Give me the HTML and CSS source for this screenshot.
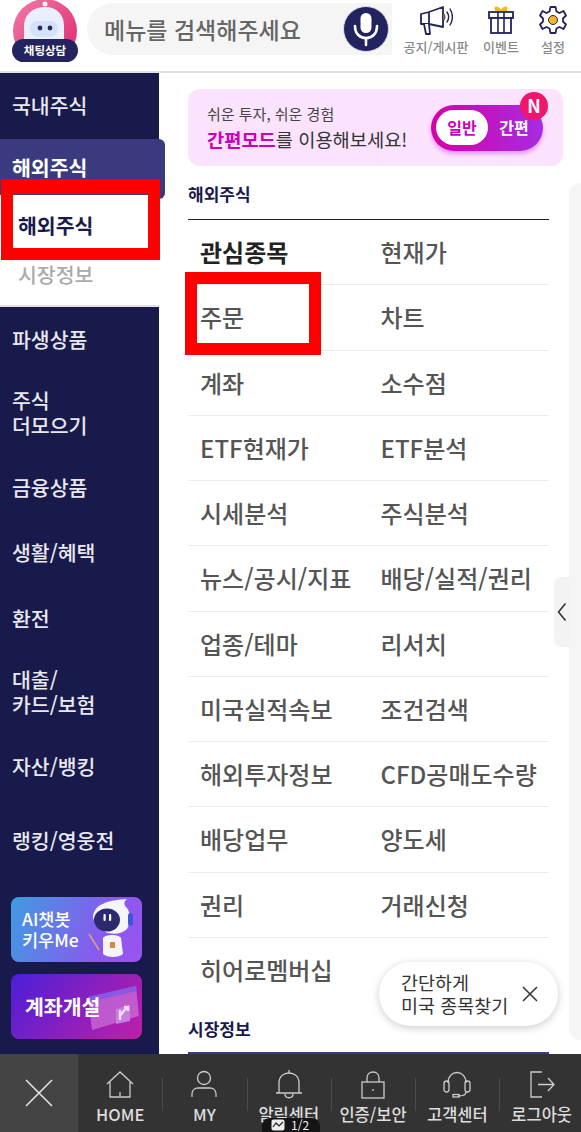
FILE: index.html
```html
<!DOCTYPE html>
<html lang="ko">
<head>
    <meta charset="utf-8">
    <meta name="viewport" content="width=device-width, initial-scale=1">
    <title>전체메뉴</title>
    <link rel="stylesheet" href="styles.css">
</head>
<body>
<div class="page">
    <!-- 상단 -->
    <div class="header">
        <div class="chat-bot">
            <svg width="66" height="62" viewBox="0 0 66 62">
                <defs>
                    <linearGradient id="botBg" x1="0" y1="0" x2="1" y2="1">
                        <stop offset="0" stop-color="#ee7da6"/>
                        <stop offset="1" stop-color="#e0246c"/>
                    </linearGradient>
                </defs>
                <circle cx="33" cy="31" r="32" fill="url(#botBg)"/>
                <circle cx="33" cy="4" r="2.500" fill="#f3f0f8"/>
                <path d="M12 44V26C12 14 22 7 33 7S52 14 52 26V44Z" fill="#eaf0fb"/>
                <rect x="18" y="21" width="28" height="16" rx="8" fill="#d3e2fa"/>
                <circle cx="28" cy="28" r="2.400" fill="#2a2a55"/>
                <circle cx="38" cy="28" r="2.400" fill="#2a2a55"/>
            </svg>
            <div class="chat-label">채팅상담</div>
        </div>
        <div class="search">
            <span class="search-text">메뉴를 검색해주세요</span>
            <div class="mic">
                <svg width="26" height="36" viewBox="0 0 26 36">
                    <rect x="7.500" y="2" width="11" height="20" rx="5.500" fill="#fff"/>
                    <path d="M2 15C2 23 7 27 13 27S24 23 24 15M13 27V34" fill="none" stroke="#fff" stroke-width="2.600" stroke-linecap="round"/>
                </svg>
            </div>
        </div>
        <div class="top-links">
            <div class="top-link notice">
                <svg width="34" height="30" viewBox="0 0 34 30">
                    <path d="M2 9L10 7L10 19L2 19ZM10 7L24 2V22L10 19" fill="#fff" stroke="#23235a" stroke-width="1.800" stroke-linejoin="round"/>
                    <path d="M5 19L7 29H11L10 19" fill="#fff" stroke="#23235a" stroke-width="1.800" stroke-linejoin="round"/>
                    <path d="M24 8C26.500 9 26.500 15 24 16Z" fill="#f3b727" stroke="#23235a" stroke-width="1"/>
                    <path d="M28 7C30 10 30 14 28 17M31 4C34 9 34 15 31 20" fill="none" stroke="#23235a" stroke-width="1.400" stroke-linecap="round"/>
                </svg>
                <span>공지/게시판</span>
            </div>
            <div class="top-link event">
                <svg width="28" height="30" viewBox="0 0 28 30">
                    <path d="M9 6C6 1 11 1 14 6C17 1 22 1 19 6" fill="#f3b727" stroke="#f3b727" stroke-width="1.400"/>
                    <rect x="2" y="7" width="24" height="6" fill="#fff" stroke="#23235a" stroke-width="1.800"/>
                    <rect x="4" y="13" width="20" height="15" fill="#fff" stroke="#23235a" stroke-width="1.800"/>
                    <path d="M11 7V28M17 7V28" stroke="#23235a" stroke-width="1.600"/>
                </svg>
                <span>이벤트</span>
            </div>
            <div class="top-link setting">
                <svg width="30" height="30" viewBox="0 0 30 30">
                    <path d="M12.500 2H17.500L18.500 6.500L21.500 8L25.500 6L28 10.500L25 13.500V16.500L28 19.500L25.500 24L21.500 22L18.500 23.500L17.500 28H12.500L11.500 23.500L8.500 22L4.500 24L2 19.500L5 16.500V13.500L2 10.500L4.500 6L8.500 8L11.500 6.500Z" fill="#fff" stroke="#23235a" stroke-width="1.800" stroke-linejoin="round"/>
                    <circle cx="15" cy="15" r="4.500" fill="#f3b727" stroke="#23235a" stroke-width="1"/>
                </svg>
                <span>설정</span>
            </div>
        </div>
    </div>

    <div class="content">
        <!-- 왼쪽 메뉴 -->
        <div class="sidebar">
            <div class="side-item">국내주식</div>
            <div class="side-active">해외주식</div>
            <div class="side-sub">
                <div class="sub-item on">해외주식</div>
                <div class="sub-item">시장정보</div>
            </div>
            <div class="side-item">파생상품</div>
            <div class="side-item tall">주식<br>더모으기</div>
            <div class="side-item">금융상품</div>
            <div class="side-item">생활/혜택</div>
            <div class="side-item">환전</div>
            <div class="side-item tall">대출/<br>카드/보험</div>
            <div class="side-item">자산/뱅킹</div>
            <div class="side-item tall">랭킹/영웅전</div>
            <div class="side-banners">
                <div class="side-banner chatbot">
                    <span>AI챗봇<br>키우Me</span>
                    <svg width="50" height="62" viewBox="0 0 50 62">
                        <path d="M12 52L2 36" stroke="#d8a27a" stroke-width="1.500"/>
                        <path d="M16 40C18 36 32 36 34 40L36 56C32 60 20 60 16 56Z" fill="#f4f4fb"/>
                        <path d="M6 20C6 6 22 2 40 1C36 4 37 7 40 10C44 16 44 24 40 31C32 39 12 38 6 20Z" fill="#f4f4fb"/>
                        <ellipse cx="20" cy="22" rx="13" ry="11.500" fill="#2b2a6e"/>
                        <rect x="16.500" y="16" width="2.200" height="7" rx="1" fill="#fff"/>
                        <rect x="22" y="16" width="2.200" height="7" rx="1" fill="#fff"/>
                        <rect x="41" y="15" width="5" height="13" rx="2.500" fill="#3f55d8"/>
                        <rect x="23" y="44" width="5" height="6" fill="#d8893a"/>
                    </svg>
                </div>
                <div class="side-banner account">
                    <svg class="card-art" width="54" height="46" viewBox="0 0 54 46">
                        <path d="M2 12L50 1L53 31L6 45Z" fill="#d98be0" fill-opacity=".55"/>
                        <path d="M2 12L50 1L50.500 6L3 17Z" fill="#7c5ae6" fill-opacity=".8"/>
                        <path d="M30 24L44 20L44 36L30 39Z" fill="#c77fe0"/>
                        <path d="M34 35L34 25M34 31L41 22M38 22L42 22L42 26" fill="none" stroke="#f3d9fb" stroke-width="2.400"/>
                    </svg>
                    <span>계좌개설</span>
                </div>
            </div>
        </div>

        <!-- 메뉴 목록 -->
        <div class="main">
            <div class="mode-banner">
                <div class="mode-text">
                    <div class="mode-small">쉬운 투자, 쉬운 경험</div>
                    <div class="mode-big"><b>간편모드</b>를 이용해보세요!</div>
                </div>
                <div class="mode-toggle">
                    <span class="mode-off">일반</span>
                    <span class="mode-on">간편</span>
                    <span class="mode-new">N</span>
                </div>
            </div>
            <div class="section-title">해외주식</div>
            <div class="menu-grid">
                <div class="menu-item strong">관심종목</div>
                <div class="menu-item">현재가</div>
                <div class="menu-item">주문</div>
                <div class="menu-item">차트</div>
                <div class="menu-item">계좌</div>
                <div class="menu-item">소수점</div>
                <div class="menu-item">ETF현재가</div>
                <div class="menu-item">ETF분석</div>
                <div class="menu-item">시세분석</div>
                <div class="menu-item">주식분석</div>
                <div class="menu-item">뉴스/공시/지표</div>
                <div class="menu-item">배당/실적/권리</div>
                <div class="menu-item">업종/테마</div>
                <div class="menu-item">리서치</div>
                <div class="menu-item">미국실적속보</div>
                <div class="menu-item">조건검색</div>
                <div class="menu-item">해외투자정보</div>
                <div class="menu-item">CFD공매도수량</div>
                <div class="menu-item">배당업무</div>
                <div class="menu-item">양도세</div>
                <div class="menu-item">권리</div>
                <div class="menu-item">거래신청</div>
                <div class="menu-item last">히어로멤버십</div>
                <div class="menu-item last"></div>
            </div>
            <div class="section-title second">시장정보</div>
        </div>
    </div>

    <!-- 오른쪽 패널, 토스트, 빨간 표시 -->
    <div class="right-panel"></div>
    <div class="panel-handle">
        <svg width="10" height="20" viewBox="0 0 10 20"><path d="M8.500 1.500L1.500 10L8.500 18.500" fill="none" stroke="#333" stroke-width="1.600"/></svg>
    </div>
    <div class="toast">
        <div class="toast-text">간단하게<br>미국 종목찾기</div>
        <svg width="16" height="16" viewBox="0 0 16 16"><path d="M1 1L15 15M15 1L1 15" stroke="#333" stroke-width="1.500"/></svg>
    </div>
    <div class="mark mark-side"></div>
    <div class="mark mark-order"></div>

    <!-- 하단 -->
    <div class="footer">
        <div class="foot-close">
            <svg width="28" height="28" viewBox="0 0 28 28"><path d="M1 1L27 27M27 1L1 27" stroke="#e8e8e8" stroke-width="1.500"/></svg>
        </div>
        <div class="foot-item">
            <svg width="30" height="30" viewBox="0 0 30 30"><path d="M2 14L15 2L28 14M5 12V27H25V12M15 22V26" fill="none" stroke="#ccc" stroke-width="1.300"/></svg>
            <span>HOME</span>
        </div>
        <div class="foot-item">
            <svg width="30" height="30" viewBox="0 0 30 30"><circle cx="15" cy="8" r="6.500" fill="none" stroke="#ccc" stroke-width="1.300"/><path d="M3 27V24C3 20 6 18 9 18H21C24 18 27 20 27 24V27" fill="none" stroke="#ccc" stroke-width="1.300"/></svg>
            <span>MY</span>
        </div>
        <div class="foot-item">
            <svg width="30" height="30" viewBox="0 0 30 30"><path d="M15 0V3M5 23V13C5 6 10 3 15 3S25 6 25 13V23M2 23H28M11 24C11 29 19 29 19 24" fill="none" stroke="#ccc" stroke-width="1.300"/></svg>
            <span>알림센터</span>
        </div>
        <div class="foot-item">
            <svg width="30" height="30" viewBox="0 0 30 30"><rect x="4" y="12" width="22" height="16" fill="none" stroke="#ccc" stroke-width="1.300"/><path d="M9 12V8C9 0 21 0 21 8V12M15 19V21" fill="none" stroke="#ccc" stroke-width="1.300"/></svg>
            <span>인증/보안</span>
        </div>
        <div class="foot-item">
            <svg width="30" height="30" viewBox="0 0 30 30"><path d="M6 13C6 -1 24 -1 24 13M24 22C24 25 21 26 16 26" fill="none" stroke="#ccc" stroke-width="1.300"/><rect x="2" y="11" width="5" height="11" rx="2.500" fill="none" stroke="#ccc" stroke-width="1.300"/><rect x="23" y="11" width="5" height="11" rx="2.500" fill="none" stroke="#ccc" stroke-width="1.300"/><rect x="11" y="24.500" width="6" height="2.500" fill="none" stroke="#ccc" stroke-width="1.300"/></svg>
            <span>고객센터</span>
        </div>
        <div class="foot-item">
            <svg width="30" height="30" viewBox="0 0 30 30"><path d="M15 2H4V27H15M11 14.500H27M21 8L27 14.500L21 21" fill="none" stroke="#ccc" stroke-width="1.300"/></svg>
            <span>로그아웃</span>
        </div>
    </div>
    <div class="pager">
        <svg width="14" height="12" viewBox="0 0 14 12"><rect x=".5" y=".5" width="13" height="11" rx="2" fill="#eee"/><path d="M2 8L5 4L8 7L12 3" fill="none" stroke="#222" stroke-width="1.200"/></svg>
        <span>1/2</span>
    </div>
</div>
</body>
</html>
```

FILE: styles.css
```css
* {
    box-sizing: border-box;
}
body {
    margin: 0;
    background: #fff;
    font-family: "Noto Sans CJK KR", "Noto Sans", sans-serif;
}
.page {
    position: relative;
    width: 581px;
    height: 1132px;
    overflow: hidden;
    display: flex;
    flex-direction: column;
}

/* header */
.header {
    height: 73px;
    flex: none;
    display: flex;
    padding: 3px 0 0 12px;
    border-bottom: 2px solid #e2e2e2;
}
.chat-bot {
    position: relative;
    width: 66px;
    height: 62px;
    margin-top: -3px;
    flex: none;
}
.chat-bot svg {
    display: block;
}
.chat-label {
    position: absolute;
    left: 0;
    top: 39px;
    width: 66px;
    height: 23px;
    border-radius: 12px;
    background: #23235f;
    color: #fff;
    font-size: 11.500px;
    font-weight: 700;
    line-height: 23px;
    text-align: center;
}
.search {
    width: 305px;
    height: 52px;
    margin-left: 9px;
    padding: 0 3px 0 17px;
    flex: none;
    display: flex;
    align-items: center;
    justify-content: space-between;
    border-radius: 26px 0 0 26px;
    background: #f5f5f5;
}
.search-text {
    color: #666;
    font-size: 23px;
    font-weight: 500;
}
.mic {
    width: 46px;
    height: 46px;
    border-radius: 50%;
    background: #23235f;
    border: 1px solid #ddd;
    display: flex;
    align-items: center;
    justify-content: center;
}
.top-links {
    flex: 1;
    display: flex;
}
.top-link {
    display: flex;
    flex-direction: column;
    align-items: center;
    color: #888;
    font-size: 13px;
    font-weight: 500;
    line-height: 18px;
    white-space: nowrap;
}
.top-link svg {
    margin: 2px 0 3px;
    display: block;
}
.top-link.notice {
    width: 72px;
    margin-left: 8px;
}
.top-link.event {
    width: 56px;
    margin-left: 1px;
}
.top-link.setting {
    width: 48px;
}

/* sidebar */
.content {
    flex: 1;
    display: flex;
    min-height: 0;
}
.sidebar {
    width: 159px;
    flex: none;
    background: #191a4c;
    color: #e8e8ee;
    font-size: 20.500px;
    font-weight: 500;
}
.side-item {
    height: 65.500px;
    padding-left: 12px;
    display: flex;
    align-items: center;
    line-height: 25px;
}
.side-item.tall {
    height: 82.500px;
}
.side-active {
    width: 165px;
    height: 60px;
    padding: 16px 0 0 12px;
    position: relative;
    margin-bottom: -4px;
    background: #3a3a7e;
    border-radius: 0 6px 6px 0;
    color: #fff;
    font-weight: 700;
    line-height: 25px;
}
.side-sub {
    height: 112px;
    position: relative;
    padding-top: 5px;
    background: #fff;
    border-bottom: 2px solid #e2e2e2;
}
.sub-item {
    height: 50px;
    padding-left: 18px;
    color: #aaa;
    line-height: 50px;
}
.sub-item.on {
    height: 49px;
    color: #191a4c;
    font-weight: 700;
}
.side-banners {
    padding: 15px 17px 0 11px;
}
.side-banner {
    height: 65px;
    margin-bottom: 12px;
    border-radius: 8px;
    display: flex;
    align-items: center;
    color: #fff;
    position: relative;
}
.side-banner.chatbot {
    padding-left: 11px;
    justify-content: space-between;
    background: linear-gradient(110deg, #3f9ce0 0%, #8b58ee 70%, #9a55f0 100%);
    font-size: 17.500px;
    font-weight: 500;
    line-height: 21px;
}
.side-banner.chatbot svg {
    margin-right: 5px;
}
.side-banner.account {
    padding-left: 14px;
    background: linear-gradient(130deg, #4b1fd8 0%, #c01fa8 100%);
    font-size: 20.500px;
    font-weight: 700;
}
.side-banner.account span {
    position: relative;
}
.card-art {
    position: absolute;
    right: 2px;
    top: 11px;
}

/* main */
.main {
    flex: 1;
    padding: 16px 32px 0 29px;
    min-width: 0;
}
.mode-banner {
    height: 77px;
    width: 375px;
    padding: 0 20px 0 19px;
    display: flex;
    align-items: center;
    justify-content: space-between;
    background: #fce3fd;
    border-radius: 12px;
}
.mode-small {
    color: #444;
    font-size: 15px;
    line-height: 22px;
}
.mode-big {
    color: #333;
    font-size: 18.700px;
    line-height: 27px;
    white-space: nowrap;
}
.mode-big b {
    color: #cc00b8;
    font-weight: 700;
}
.mode-toggle {
    position: relative;
    width: 112px;
    height: 46px;
    padding: 5px 0 0 5px;
    flex: none;
    display: flex;
    border-radius: 23px;
    background: linear-gradient(90deg, #d600a8, #a82ce0);
    box-shadow: 0 3px 4px rgba(190, 60, 230, .45);
    font-size: 16px;
    font-weight: 700;
}
.mode-off {
    width: 52px;
    height: 35px;
    border-radius: 18px;
    background: #fff;
    color: #cc00b8;
    line-height: 34px;
    text-align: center;
}
.mode-on {
    width: 52px;
    color: #fff;
    line-height: 34px;
    text-align: center;
}
.mode-new {
    position: absolute;
    right: -5px;
    top: -13px;
    width: 28px;
    height: 28px;
    border-radius: 50%;
    background: #f0166e;
    color: #fff;
    font-size: 18px;
    font-weight: 700;
    line-height: 27px;
    text-align: center;
}
.section-title {
    margin-top: 16px;
    height: 37px;
    color: #191a4c;
    font-size: 17px;
    font-weight: 700;
    line-height: 24px;
}
.section-title.second {
    margin-top: 0;
    padding-top: 1px;
    height: 38px;
    width: 361px;
    border-bottom: 2px solid #3a3a7e;
}
.menu-grid {
    width: 361px;
    display: grid;
    grid-template-columns: 1fr 1fr;
    border-top: 1px solid #222;
}
.menu-item {
    height: 65.250px;
    padding-left: 12px;
    color: #555;
    font-size: 24px;
    font-weight: 500;
    line-height: 63px;
    white-space: nowrap;
    border-bottom: 1px solid #ececec;
}
.menu-item.strong {
    color: #222;
    font-weight: 700;
}
.menu-item.last {
    height: 78px;
    border-bottom: 0;
}

/* overlays */
.right-panel {
    position: absolute;
    left: 569px;
    top: 183px;
    width: 12px;
    height: 857px;
    background: #f5f5f5;
    border-radius: 12px 0 0 12px;
}
.panel-handle {
    position: absolute;
    left: 554px;
    top: 577px;
    width: 16px;
    height: 70px;
    display: flex;
    align-items: center;
    justify-content: center;
    background: #f3f3f3;
    border-radius: 8px 0 0 8px;
}
.toast {
    position: absolute;
    left: 379px;
    top: 962px;
    width: 179px;
    height: 64px;
    padding: 0 20px 0 22px;
    display: flex;
    align-items: center;
    justify-content: space-between;
    background: #fff;
    border-radius: 32px;
    box-shadow: 0 2px 8px rgba(0, 0, 0, .2);
}
.toast-text {
    color: #333;
    font-size: 18.500px;
    line-height: 23px;
    white-space: nowrap;
}
.mark {
    position: absolute;
    border: 12px solid #f00;
}
.mark-side {
    left: 1px;
    top: 179px;
    width: 159px;
    height: 81px;
    border-top-width: 15px;
}
.mark-order {
    left: 185px;
    top: 272px;
    width: 136px;
    height: 83px;
}

/* footer */
.footer {
    height: 78px;
    flex: none;
    display: flex;
    background: #333;
}
.foot-close {
    width: 78px;
    flex: none;
    display: flex;
    align-items: center;
    justify-content: center;
    background: #444;
}
.foot-item {
    width: 84.300px;
    flex: none;
    padding-top: 16px;
    position: relative;
    display: flex;
    flex-direction: column;
    align-items: center;
    color: #ddd;
    font-size: 16.500px;
    font-weight: 500;
    line-height: 22px;
    white-space: nowrap;
}
.foot-item svg {
    margin-bottom: 3px;
}
.foot-item + .foot-item::before {
    content: "";
    position: absolute;
    left: 0;
    top: 24px;
    height: 33px;
    border-left: 1px solid #4c4c4c;
}
.pager {
    position: absolute;
    left: 262px;
    top: 1118px;
    width: 58px;
    height: 14px;
    padding-left: 9px;
    display: flex;
    align-items: center;
    gap: 6px;
    background: #151515;
    border-radius: 8px 8px 0 0;
    color: #eee;
    font-size: 12px;
    line-height: 14px;
}
```
